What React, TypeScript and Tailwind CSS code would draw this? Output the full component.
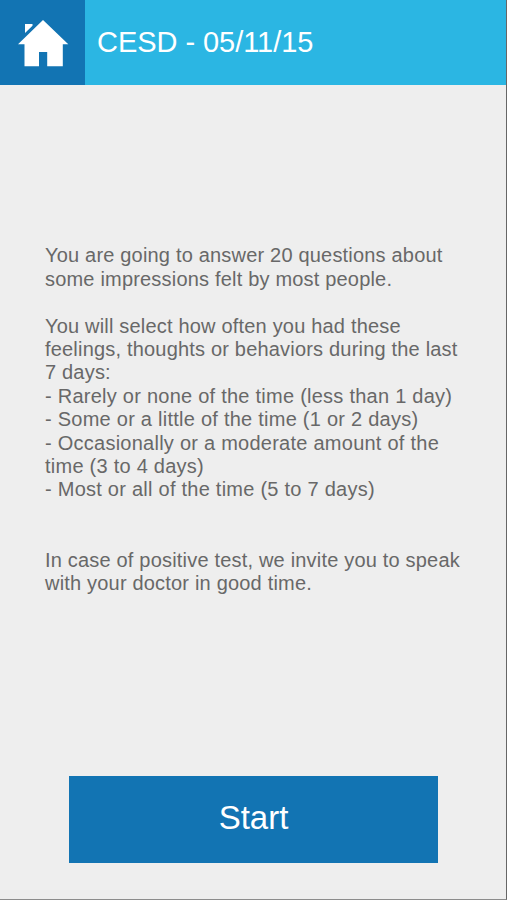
import React from 'react';

const CHOICES = [
  'Rarely or none of the time (less than 1 day)',
  'Some or a little of the time (1 or 2 days)',
  'Occasionally or a moderate amount of the time (3 to 4 days)',
  'Most or all of the time (5 to 7 days)',
];

const HomeIcon: React.FC = () => (
  <svg width="52" height="48" viewBox="0 0 52 48" fill="#fff" aria-hidden="true">
    {/* chimney */}
    <path d="M8 5H15.5V6.8L8 14.1Z" />
    <path d="M26 1 51.3 25.3H45.8V47.2H30.2V33H22V47.2H7.5V25.3H1Z" />
  </svg>
);

export default function App() {
  return (
    <div className="flex h-[900px] w-[507px] flex-col border-r border-b border-r-[#666] border-b-[#8c8c8c] bg-[#eeeeee] font-['Liberation_Sans',Arial,sans-serif]">
      <header className="flex h-[85px] shrink-0 items-center bg-[#2bb6e3]">
        <button aria-label="Home" className="flex h-full w-[85px] items-center justify-center bg-[#1274b3]">
          <HomeIcon />
        </button>
        <h1 className="ml-3 text-[29px] leading-none tracking-[-0.05px] text-white">CESD - 05/11/15</h1>
      </header>

      <main className="flex-1 px-[45px] pt-[159.4px] text-[20px] leading-[23.4px] tracking-[0.19px] text-[#686868]">
        <p className="w-[420px]">
          You are going to answer 20 questions about some impressions felt by most people.
        </p>
        <p className="mt-[23.4px] w-[420px]">
          You will select how often you had these feelings, thoughts or behaviors during the last 7 days:
        </p>
        <ul className="w-[420px] tracking-[0.25px]">
          {CHOICES.map((choice) => (
            <li key={choice}>{`- ${choice}`}</li>
          ))}
        </ul>
        <p className="mt-[46.8px] w-[420px]">
          In case of positive test, we invite you to speak with your doctor in good time.
        </p>
      </main>

      <button className="mb-9 ml-[69px] h-[87px] w-[369px] shrink-0 bg-[#1274b3] pb-[4px] text-[33px] text-white">
        Start
      </button>
    </div>
  );
}
